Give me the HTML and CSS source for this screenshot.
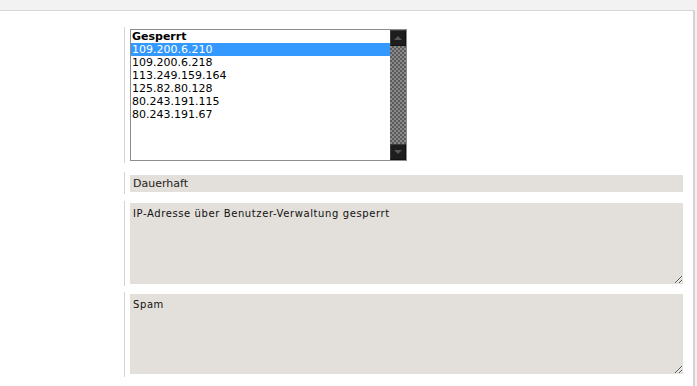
FILE: index.html
```html
<!DOCTYPE html>
<html lang="de">
<head>
<meta charset="utf-8">
<title>IP-Sperre</title>
<link rel="stylesheet" href="styles.css">
</head>
<body>
<div class="panel">
  <div class="row row-list">
    <div class="listbox">
      <div class="options">
        <div class="opt head">Gesperrt</div>
        <div class="opt selected">109.200.6.210</div>
        <div class="opt">109.200.6.218</div>
        <div class="opt">113.249.159.164</div>
        <div class="opt">125.82.80.128</div>
        <div class="opt">80.243.191.115</div>
        <div class="opt">80.243.191.67</div>
      </div>
      <div class="scrollbar">
        <div class="sbtn up"><span class="tri"></span></div>
        <div class="track"></div>
        <div class="sbtn down"><span class="tri"></span></div>
      </div>
    </div>
  </div>
  <div class="row row-bar">
    <div class="bar">Dauerhaft</div>
  </div>
  <div class="row row-ta1">
    <textarea class="ta" readonly>IP-Adresse über Benutzer-Verwaltung gesperrt</textarea>
  </div>
  <div class="row row-ta2">
    <textarea class="ta ta2" readonly>Spam</textarea>
  </div>
</div>
</body>
</html>
```

FILE: styles.css
```css
html, body {
  margin: 0;
  padding: 0;
  background: #f2f2f2;
  font-family: "DejaVu Sans", Verdana, sans-serif;
  color: #000;
}

.panel {
  margin-top: 10px;
  width: 695px;
  height: 376px;
  box-sizing: border-box;
  background: #fff;
  border-top: 1px solid #d6d6d6;
  border-right: 2px solid #d2d2d2;
  padding: 16px 0 0 124px;
}

.row {
  border-left: 1px solid #d4d4d4;
  padding: 2px 0 3px 5px;
}

.row-list { padding-bottom: 2px; }
.row-bar { margin-top: 9px; padding: 3px 0 2px 5px; }
.row-ta1 { margin-top: 7px; padding: 2px 0 2px 5px; }
.row-ta2 { margin-top: 6px; padding: 2px 0 3px 5px; }

.listbox {
  display: flex;
  width: 277px;
  height: 132px;
  box-sizing: border-box;
  border: 1px solid #8d8d8d;
  background: #fff;
}

.options {
  flex: 1;
  padding-top: 0;
  font-size: 11px;
  line-height: 13px;
}

.opt {
  padding-left: 1px;
  white-space: nowrap;
}

.opt.head { font-weight: bold; }

.opt.selected {
  background: #3399ff;
  color: #fff;
}

.scrollbar {
  width: 16px;
  display: flex;
  flex-direction: column;
}

.track {
  flex: 1;
  background: repeating-conic-gradient(#5a5a5a 0 25%, #8a8a8a 0 50%) 0 0 / 4px 4px;
}

.sbtn {
  height: 16px;
  box-sizing: border-box;
  background: #1d1d1d;
  border: 1px solid #3c3c3c;
  border-right-color: #111;
  border-bottom-color: #111;
  display: flex;
  align-items: center;
  justify-content: center;
}

.tri {
  width: 0;
  height: 0;
  border-left: 4px solid transparent;
  border-right: 4px solid transparent;
}

.up .tri { border-bottom: 4px solid #555; }
.down .tri { border-top: 4px solid #555; }

.bar {
  width: 553px;
  height: 17px;
  box-sizing: border-box;
  background: #e3dfda;
  font-size: 11px;
  line-height: 17px;
  padding-left: 3px;
  color: #222;
}

.ta {
  display: block;
  width: 553px;
  height: 81px;
  box-sizing: border-box;
  margin: 0;
  border: none;
  outline: none;
  background: #e3dfda;
  font-family: "DejaVu Sans", Verdana, sans-serif;
  font-size: 10px;
  letter-spacing: 0.6px;
  line-height: 12px;
  color: #111;
  padding: 5px 3px;
}

.ta2 { height: 80px; }
```
